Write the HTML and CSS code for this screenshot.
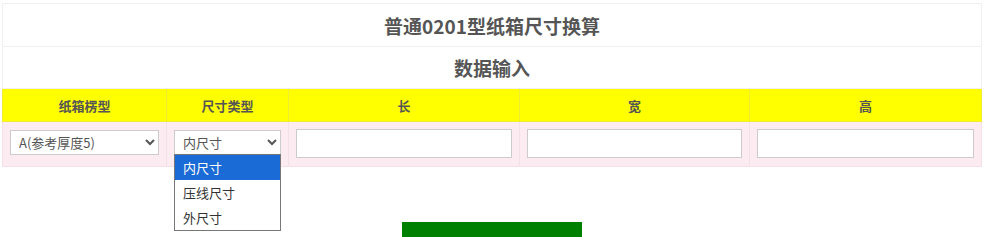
FILE: index.html
```html
<!DOCTYPE html>
<html lang="zh-CN">
<head>
  <meta charset="UTF-8" />
  <title>普通0201型纸箱尺寸换算</title>
  <link rel="stylesheet" href="styles.css">
</head>
<body>

<table class="calc">
  <colgroup>
    <col style="width:164px">
    <col style="width:122px">
    <col style="width:231px">
    <col style="width:230px">
    <col style="width:232px">
  </colgroup>
  <tr>
    <td colspan="5" class="title">普通0201型纸箱尺寸换算</td>
  </tr>
  <tr>
    <td colspan="5" class="title sub">数据输入</td>
  </tr>
  <tr class="head">
    <th>纸箱楞型</th>
    <th>尺寸类型</th>
    <th>长</th>
    <th>宽</th>
    <th>高</th>
  </tr>
  <tr class="inputs">
    <td>
      <select class="flute">
        <option>A(参考厚度5)</option>
        <option>B(参考厚度3)</option>
        <option>C(参考厚度4)</option>
      </select>
    </td>
    <td class="type-cell">
      <select class="size-type">
        <option>内尺寸</option>
        <option>压线尺寸</option>
        <option>外尺寸</option>
      </select>
      <!-- open dropdown list -->
      <ul class="dropdown">
        <li class="active">内尺寸</li>
        <li>压线尺寸</li>
        <li>外尺寸</li>
      </ul>
    </td>
    <td><input type="text" class="dim" /></td>
    <td><input type="text" class="dim" /></td>
    <td><input type="text" class="dim" /></td>
  </tr>
</table>

<div class="actions">
  <button class="btn"></button>
</div>

</body>
</html>
```

FILE: styles.css
```css
body {
  margin: 0;
  font-family: "Noto Sans CJK SC", "Noto Sans", sans-serif;
  color: #555;
  background: #fff;
}
.calc {
  margin: 3px 0 0 2px;
  width: 979px;
  border-collapse: collapse;
  table-layout: fixed;
}
.calc td, .calc th {
  border: 1px solid #f0f0f0;
  padding: 0;
}
.title {
  height: 42px;
  text-align: center;
  font-size: 19px;
  font-weight: bold;
  color: #555;
}
.sub { height: 41px; }
.head th {
  background: #ffff00;
  border-color: #eeee30;
  height: 32px;
  font-size: 13px;
  font-weight: bold;
  color: #555;
}
.inputs td {
  background: #fdebf2;
  border-color: #f5e0e6;
  padding: 7px 7px 7px 7px;
  height: 30px;
  vertical-align: top;
}
.type-cell { position: relative; }
select {
  height: 25px;
  font-family: inherit;
  font-size: 13px;
  color: #555;
  border: 1px solid #ccc;
  background: #fff;
  padding: 0 4px;
}
.flute { width: 149px; }
.size-type { width: 107px; }
.dim {
  box-sizing: border-box;
  width: 100%;
  height: 29px;
  border: 1px solid #ccc;
  background: #fff;
}
.dropdown {
  position: absolute;
  left: 7px;
  top: 32px;
  width: 105px;
  margin: 0;
  padding: 0;
  list-style: none;
  background: #fff;
  border: 1px solid #777;
  z-index: 5;
}
.dropdown li {
  height: 25px;
  line-height: 25px;
  padding-left: 8px;
  font-size: 13px;
  color: #333;
}
.dropdown li.active {
  background: #1a6bd5;
  color: #fff;
}
.actions {
  text-align: center;
  margin-top: 55px;
  padding-right: 3px;
}
.btn {
  display: block;
  margin: 0 auto;
  width: 180px;
  height: 16px;
  background: #008000;
  border: none;
}
```
